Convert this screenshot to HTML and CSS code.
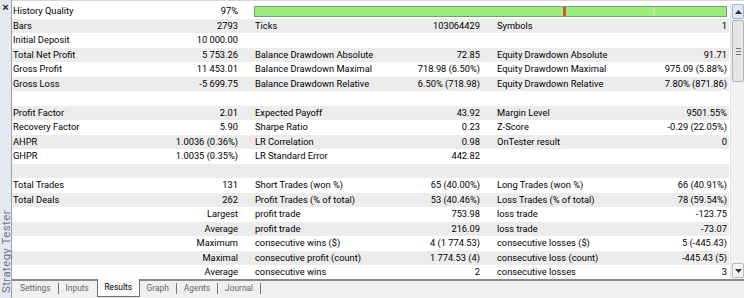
FILE: index.html
```html
<!DOCTYPE html>
<html lang="en">
<head>
    <meta charset="UTF-8">
    <title>Strategy Tester</title>
    <link rel="stylesheet" href="styles.css">
</head>
<body>
<div class="tester">
    <div class="side">
        <span class="close">&#215;</span>
        <span class="side_title">Strategy Tester</span>
    </div>

    <div class="main">
        <div class="content">
            <div class="report">
                <div class="row">
                    <span class="lbl first">History Quality</span><span class="val">97%</span>
                    <div class="quality"><i class="mark red"></i><i class="mark pale"></i></div>
                </div>
                <div class="row">
                    <span class="lbl first">Bars</span><span class="val">2793</span>
                    <span class="lbl">Ticks</span><span class="val">103064429</span>
                    <span class="lbl">Symbols</span><span class="val">1</span>
                </div>
                <div class="row">
                    <span class="lbl first">Initial Deposit</span><span class="val">10 000.00</span>
                    <span class="lbl"></span><span class="val"></span>
                    <span class="lbl"></span><span class="val"></span>
                </div>
                <div class="row">
                    <span class="lbl first">Total Net Profit</span><span class="val">5 753.26</span>
                    <span class="lbl">Balance Drawdown Absolute</span><span class="val">72.85</span>
                    <span class="lbl">Equity Drawdown Absolute</span><span class="val">91.71</span>
                </div>
                <div class="row">
                    <span class="lbl first">Gross Profit</span><span class="val">11 453.01</span>
                    <span class="lbl">Balance Drawdown Maximal</span><span class="val">718.98 (6.50%)</span>
                    <span class="lbl">Equity Drawdown Maximal</span><span class="val">975.09 (5.88%)</span>
                </div>
                <div class="row">
                    <span class="lbl first">Gross Loss</span><span class="val">-5 699.75</span>
                    <span class="lbl">Balance Drawdown Relative</span><span class="val">6.50% (718.98)</span>
                    <span class="lbl">Equity Drawdown Relative</span><span class="val">7.80% (871.86)</span>
                </div>
                <div class="row"></div>
                <div class="row">
                    <span class="lbl first">Profit Factor</span><span class="val">2.01</span>
                    <span class="lbl">Expected Payoff</span><span class="val">43.92</span>
                    <span class="lbl">Margin Level</span><span class="val">9501.55%</span>
                </div>
                <div class="row">
                    <span class="lbl first">Recovery Factor</span><span class="val">5.90</span>
                    <span class="lbl">Sharpe Ratio</span><span class="val">0.23</span>
                    <span class="lbl">Z-Score</span><span class="val">-0.29 (22.05%)</span>
                </div>
                <div class="row">
                    <span class="lbl first">AHPR</span><span class="val">1.0036 (0.36%)</span>
                    <span class="lbl">LR Correlation</span><span class="val">0.98</span>
                    <span class="lbl">OnTester result</span><span class="val">0</span>
                </div>
                <div class="row">
                    <span class="lbl first">GHPR</span><span class="val">1.0035 (0.35%)</span>
                    <span class="lbl">LR Standard Error</span><span class="val">442.82</span>
                    <span class="lbl"></span><span class="val"></span>
                </div>
                <div class="row"></div>
                <div class="row">
                    <span class="lbl first">Total Trades</span><span class="val">131</span>
                    <span class="lbl">Short Trades (won %)</span><span class="val">65 (40.00%)</span>
                    <span class="lbl">Long Trades (won %)</span><span class="val">66 (40.91%)</span>
                </div>
                <div class="row">
                    <span class="lbl first">Total Deals</span><span class="val">262</span>
                    <span class="lbl">Profit Trades (% of total)</span><span class="val">53 (40.46%)</span>
                    <span class="lbl">Loss Trades (% of total)</span><span class="val">78 (59.54%)</span>
                </div>
                <div class="row">
                    <span class="lbl first"></span><span class="val">Largest</span>
                    <span class="lbl">profit trade</span><span class="val">753.98</span>
                    <span class="lbl">loss trade</span><span class="val">-123.75</span>
                </div>
                <div class="row">
                    <span class="lbl first"></span><span class="val">Average</span>
                    <span class="lbl">profit trade</span><span class="val">216.09</span>
                    <span class="lbl">loss trade</span><span class="val">-73.07</span>
                </div>
                <div class="row">
                    <span class="lbl first"></span><span class="val">Maximum</span>
                    <span class="lbl">consecutive wins ($)</span><span class="val">4 (1 774.53)</span>
                    <span class="lbl">consecutive losses ($)</span><span class="val">5 (-445.43)</span>
                </div>
                <div class="row">
                    <span class="lbl first"></span><span class="val">Maximal</span>
                    <span class="lbl">consecutive profit (count)</span><span class="val">1 774.53 (4)</span>
                    <span class="lbl">consecutive loss (count)</span><span class="val">-445.43 (5)</span>
                </div>
                <div class="row">
                    <span class="lbl first"></span><span class="val">Average</span>
                    <span class="lbl">consecutive wins</span><span class="val">2</span>
                    <span class="lbl">consecutive losses</span><span class="val">3</span>
                </div>
            </div>

            <div class="scroll">
                <div class="sbtn up"><svg width="7" height="4" viewBox="0 0 7 4"><path d="M0 4 L3.5 0 L7 4 Z" fill="#333"/></svg></div>
                <div class="thumb"><span class="grip"></span></div>
                <div class="track"></div>
                <div class="sbtn down"><svg width="7" height="4" viewBox="0 0 7 4"><path d="M0 0 L3.5 4 L7 0 Z" fill="#333"/></svg></div>
            </div>
        </div>

        <div class="tabs">
            <span class="tab">Settings</span><span class="sep"></span>
            <span class="tab">Inputs</span>
            <span class="tab active">Results</span>
            <span class="tab">Graph</span><span class="sep"></span>
            <span class="tab">Agents</span><span class="sep"></span>
            <span class="tab">Journal</span><span class="sep"></span>
        </div>
    </div>
</div>
</body>
</html>
```

FILE: styles.css
```css
body{
    margin:0;
    background:#f0f0f0;
    font-family:Roboto, "Liberation Sans", Arial, sans-serif;
    font-size:9.3px;
    color:#000;
}

.tester{
    display:flex;
    width:744px;
    height:298px;
    overflow:hidden;
}

/* left strip with close box and vertical title */
.side{
    width:11px;
    background:#e3e9f0;
    border-right:1px solid #9aa3ad;
    display:flex;
    flex-direction:column;
    justify-content:space-between;
    align-items:center;
}

.close{
    font-family:"Liberation Sans", Arial, sans-serif;
    font-size:11px;
    font-weight:bold;
    line-height:10px;
    margin-top:2px;
    color:#222;
}

.side_title{
    writing-mode:vertical-rl;
    transform:rotate(180deg);
    color:#6f7a86;
    font-size:11.5px;
    letter-spacing:0.4px;
    margin-bottom:5px;
}

.main{
    flex:1;
    display:flex;
    flex-direction:column;
}

.content{
    height:279px;
    display:flex;
    background:#fff;
    border-top:1px solid #d6d6d6;
    box-sizing:border-box;
    padding-top:3px;
}

.report{
    width:717px;
}

.row{
    display:grid;
    grid-template-columns:120px 106px 142px 100px 142px 105px;
    height:14.5px;
    line-height:14.5px;
    padding-right:2px;
}

.row:nth-child(even){
    background:#ececec;
}

.lbl{
    padding-left:17px;
    white-space:nowrap;
}

.lbl.first{
    padding-left:1px;
}

.val{
    text-align:right;
    white-space:nowrap;
}

/* history quality bar */
.quality{
    grid-column:3 / 7;
    margin:2px 0 2px 16px;
    background:#9cee7c;
    border:1px solid #7a9a78;
    position:relative;
}

.mark{
    position:absolute;
    top:0;
    bottom:0;
    width:3px;
}

.mark.red{
    left:308px;
    background:#d9532e;
}

.mark.pale{
    left:398px;
    width:2px;
    background:#c4e8a0;
}

/* scrollbar */
.scroll{
    width:14px;
    margin-left:1px;
    display:flex;
    flex-direction:column;
    background:#f2f2f2;
    border-left:1px solid #e2e2e2;
}

.sbtn{
    height:13px;
    margin:0 1px;
    border:1px solid #9fb3c8;
    border-radius:2px;
    background:#dde9f5;
    display:flex;
    align-items:center;
    justify-content:center;
}

.sbtn.down{
    background:#f4f4f4;
    border-color:#b8b8b8;
    margin-bottom:1px;
}

.thumb{
    height:60px;
    margin:1px 1px 0;
    border:1px solid #b3b3b3;
    border-radius:2px;
    background:#e6e6e6;
    display:flex;
    align-items:center;
    justify-content:center;
}

.grip{
    width:5px;
    height:5px;
    border-top:1px solid #777;
    border-bottom:1px solid #777;
    background:linear-gradient(#777,#777) center/100% 1px no-repeat;
}

.track{
    flex:1;
}

/* tabs */
.tabs{
    height:19px;
    border-top:2px solid #8a8a8a;
    display:flex;
    align-items:flex-start;
    padding-left:1px;
    box-sizing:border-box;
}

.tab{
    color:#666;
    padding:0 7px;
    height:15px;
    line-height:15px;
    font-size:8.4px;
}

.sep{
    width:1px;
    height:11px;
    margin-top:2px;
    background:#777;
}

.tab.active{
    color:#000;
    background:#fafafa;
    border:1px solid #6f6f6f;
    border-top:none;
    margin:-2px 0 0 1px;
    height:17px;
    line-height:17px;
    padding:0 6.5px;
}
```
